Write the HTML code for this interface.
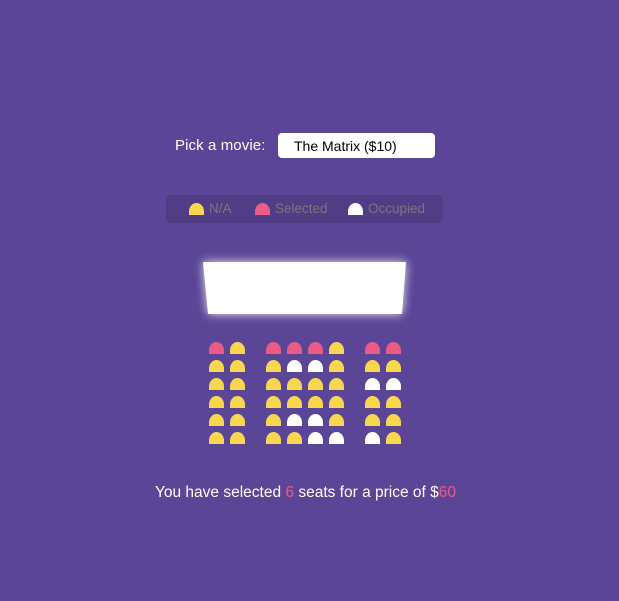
<!DOCTYPE html>
<html><head><style>
body{margin:0;width:619px;height:601px;background:#5a4596;font-family:"Liberation Sans",sans-serif;position:relative;overflow:hidden;color:#fff}
.a{position:absolute}
.s{position:absolute;width:15px;height:12px;border-radius:8px 8px 0 0/9px 9px 0 0;background:#f8d74f}
.p{background:#ea5c86}.w{background:#fff}
</style></head><body>
<div class="a" style="left:175px;top:137px;font-size:15px;letter-spacing:0.1px">Pick a movie:</div>
<div class="a" style="left:278px;top:133px;width:157px;height:25px;background:#fff;border-radius:4px;color:#000;font-size:14px;line-height:26px;"><span style="margin-left:16px">The Matrix ($10)</span></div>
<div class="a" style="left:166px;top:195px;width:277px;height:28px;background:rgba(0,0,0,0.1);border-radius:5px;color:#777;font-size:13.5px;">
<div class="s" style="left:23px;top:8px"></div><span class="a" style="left:43px;top:6px">N/A</span>
<div class="s p" style="left:89px;top:8px"></div><span class="a" style="left:109px;top:6px">Selected</span>
<div class="s w" style="left:182px;top:8px"></div><span class="a" style="left:202px;top:6px">Occupied</span>
</div>
<svg class="a" style="left:0;top:0" width="619" height="601">
<defs><filter id="g" x="-20%" y="-40%" width="140%" height="180%"><feGaussianBlur stdDeviation="5"/></filter></defs>
<polygon points="203,262 406,262 402,314 208,314" fill="#fff" filter="url(#g)" opacity="0.9"/>
<polygon points="203,262 406,262 402,314 208,314" fill="#fff"/>
</svg>
<div id="seats"></div>
<div class="a" style="left:0;width:611px;text-align:center;top:484px;font-size:15.5px;">You have selected <span style="color:#ea5c86">6</span> seats for a price of $<span style="color:#ea5c86">60</span></div>
<script>
var rows=["PY PPPY PP","YY YWWY YY","YY YYYY WW","YY YYYY YY","YY YWWY YY","YY YYWW WY"];
var xs=[209,230,266,287,308,329,365,386],h="";
rows.forEach(function(r,i){var c=r.replace(/ /g,"");for(var j=0;j<8;j++){var k=c[j]=="P"?" p":c[j]=="W"?" w":"";h+='<div class="s'+k+'" style="left:'+xs[j]+'px;top:'+(342+18*i)+'px"></div>';}});
document.getElementById("seats").innerHTML=h;
</script>
</body></html>
